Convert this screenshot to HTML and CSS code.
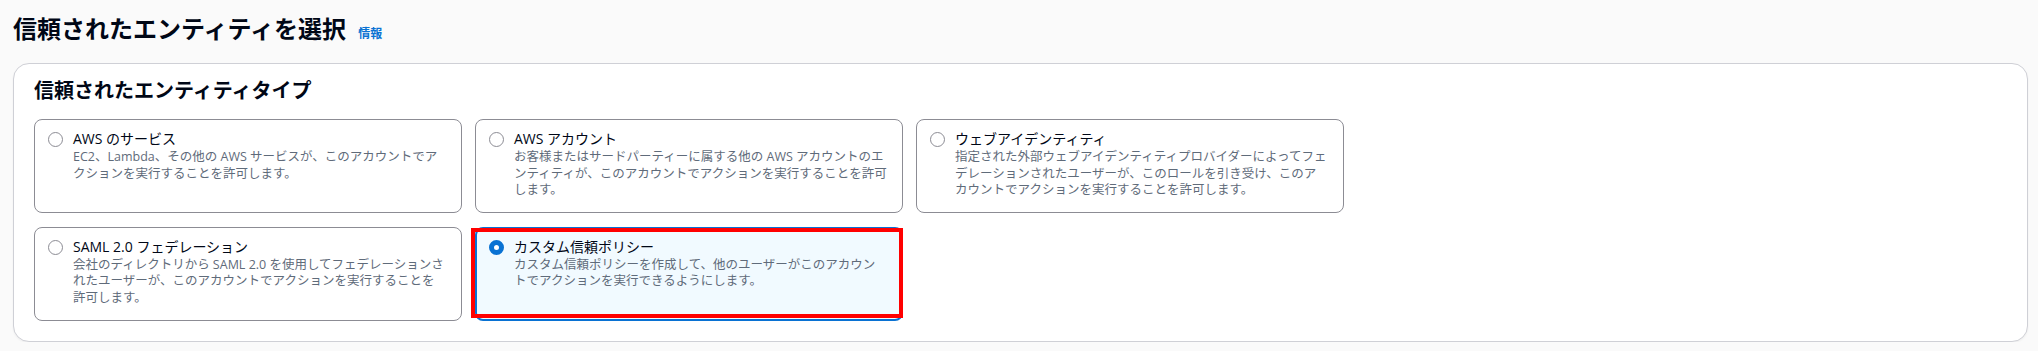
FILE: index.html
```html
<!DOCTYPE html>
<html lang="ja">
<head>
  <meta charset="UTF-8" />
  <meta name="viewport" content="width=device-width, initial-scale=1.0"/>
  <title>信頼されたエンティティを選択</title>
  <link rel="stylesheet" href="styles.css">
</head>
<body>

<div class="page-header">
  <h1>信頼されたエンティティを選択</h1>
  <a class="info-link">情報</a>
</div>

<div class="container">
  <h2>信頼されたエンティティタイプ</h2>

  <div class="tiles">
    <label class="tile">
      <span class="radio"></span>
      <span class="tile-body">
        <span class="tile-title">AWS のサービス</span>
        <span class="tile-desc">EC2、Lambda、その他の AWS サービスが、このアカウントでア<br>クションを実行することを許可します。</span>
      </span>
    </label>

    <label class="tile">
      <span class="radio"></span>
      <span class="tile-body">
        <span class="tile-title">AWS アカウント</span>
        <span class="tile-desc">お客様またはサードパーティーに属する他の AWS アカウントのエ<br>ンティティが、このアカウントでアクションを実行することを許可<br>します。</span>
      </span>
    </label>

    <label class="tile">
      <span class="radio"></span>
      <span class="tile-body">
        <span class="tile-title">ウェブアイデンティティ</span>
        <span class="tile-desc">指定された外部ウェブアイデンティティプロバイダーによってフェ<br>デレーションされたユーザーが、このロールを引き受け、このア<br>カウントでアクションを実行することを許可します。</span>
      </span>
    </label>

    <label class="tile">
      <span class="radio"></span>
      <span class="tile-body">
        <span class="tile-title">SAML 2.0 フェデレーション</span>
        <span class="tile-desc">会社のディレクトリから SAML 2.0 を使用してフェデレーションさ<br>れたユーザーが、このアカウントでアクションを実行することを<br>許可します。</span>
      </span>
    </label>

    <label class="tile selected">
      <span class="radio"></span>
      <span class="tile-body">
        <span class="tile-title">カスタム信頼ポリシー</span>
        <span class="tile-desc">カスタム信頼ポリシーを作成して、他のユーザーがこのアカウン<br>トでアクションを実行できるようにします。</span>
      </span>
    </label>
  </div>
</div>

</body>
</html>
```

FILE: styles.css
```css
* { margin: 0; padding: 0; box-sizing: border-box; }
body {
  font-family: 'Open Sans', 'Noto Sans CJK JP', sans-serif;
  background: #fafafa;
  color: #000716;
}

.page-header {
  display: flex;
  align-items: baseline;
  gap: 12px;
  padding: 14px 13px 0;
}

h1 {
  font-size: 24px;
  line-height: 30px;
  font-weight: 700;
}

.info-link {
  font-size: 12px;
  font-weight: 700;
  color: #0972d3;
  cursor: pointer;
}

.container {
  margin: 19px 10px 0 13px;
  background: #fff;
  border: 1px solid #cfd0d6;
  border-radius: 16px;
  padding: 15px 20px 20px;
  box-shadow: 0 1px 2px rgba(0, 7, 22, 0.05);
}

h2 {
  font-size: 20px;
  line-height: 24px;
  font-weight: 700;
  margin-bottom: 16px;
}

.tiles {
  display: grid;
  grid-template-columns: repeat(3, 428px);
  gap: 14px 13px;
}

.tile {
  position: relative;
  display: flex;
  gap: 10px;
  border: 1px solid #8c8c94;
  border-radius: 8px;
  padding: 9px 4px 13px 13px;
  background: #fff;
  cursor: pointer;
}

.radio {
  flex: none;
  width: 15px;
  height: 15px;
  margin-top: 3px;
  border: 1.5px solid #8c8c94;
  border-radius: 50%;
  background: #fff;
}

.tile-body {
  display: flex;
  flex-direction: column;
}

.tile-title {
  font-size: 14px;
  line-height: 20px;
  font-weight: 400;
}

.tile-desc {
  font-size: 12.5px;
  line-height: 16.6px;
  color: #5f6b7a;
}

.tile.selected {
  border: 2px solid #0972d3;
  background: #f1faff;
  padding: 8px 3px 12px 12px;
}

.tile.selected .radio {
  border: 5px solid #0972d3;
}

/* red annotation box */
.tile.selected::after {
  content: "";
  position: absolute;
  left: -6px;
  right: -2px;
  top: -1px;
  bottom: 1px;
  border: 4px solid #f00;
}
```
